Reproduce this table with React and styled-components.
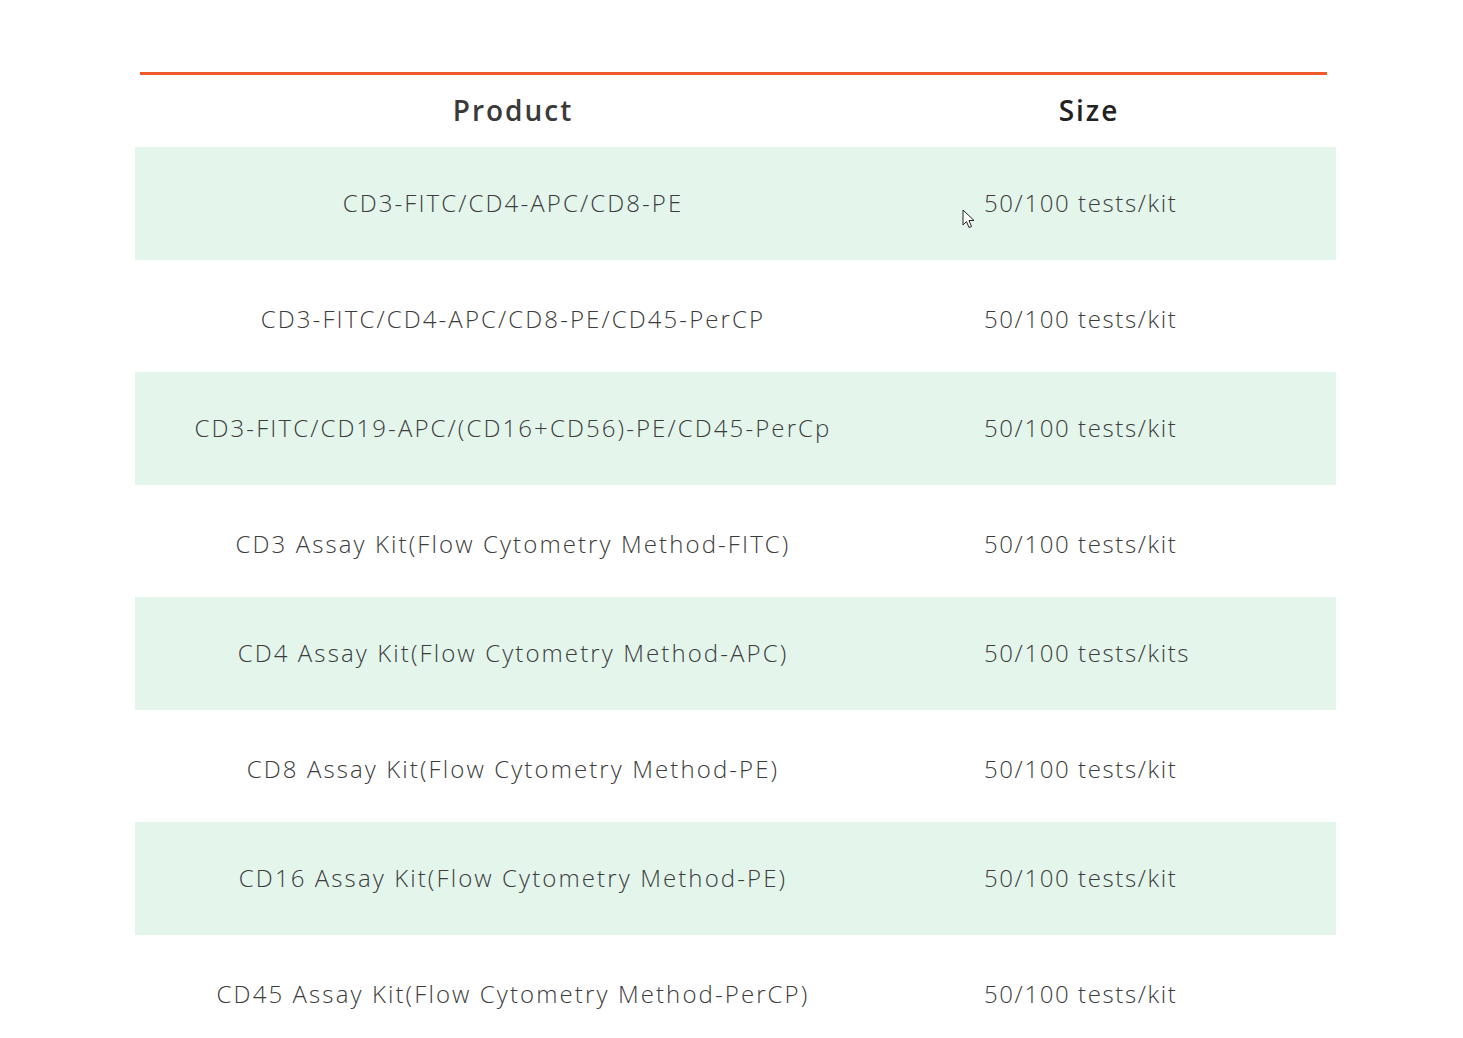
import React from 'react';
import styled, { createGlobalStyle } from 'styled-components';

const GlobalStyle = createGlobalStyle`
    body {
        margin: 0;
        background: #ffffff;
        font-family: 'Open Sans', 'Noto Sans', sans-serif;
    }
`

const Page = styled.div`
    padding: 72px 0 0 135px;
    position: relative;
`
const Table = styled.div`
    width: 1201px;
`
const Rule = styled.div`
    height: 3px;
    width: 1187px;
    margin-left: 5px;
    background: #f05a2a;
`
const HeadRow = styled.div`
    display: grid;
    grid-template-columns: 756px 1fr;
    height: 72px;
    align-items: center;
`
const HeadCell = styled.div`
    text-align: center;
    font-size: 28px;
    font-weight: 600;
    letter-spacing: 2px;
    color: ${p => p.dark ? '#222222' : '#3a3a3a'};
    padding-right: ${p => p.shift || 0}px;
    margin-top: -2px;
`
const Row = styled.div`
    display: grid;
    grid-template-columns: 756px 1fr;
    height: ${p => p.striped ? 113 : 112}px;
    align-items: center;
    background: ${p => p.striped ? '#e4f5ec' : '#ffffff'};
`
const Cell = styled.div`
    font-size: 24px;
    font-weight: 300;
    letter-spacing: ${p => p.left ? 1.6 : 2.1}px;
    color: #3c3c3c;
    white-space: nowrap;
    text-align: ${p => p.left ? 'left' : 'center'};
    padding-left: ${p => p.left ? 93 : 0}px;
    margin-top: ${p => p.striped ? -3 : 4}px;
`
const Cursor = styled.svg`
    position: absolute;
    left: 962px;
    top: 209px;
`

const rows = [
    ['CD3-FITC/CD4-APC/CD8-PE', '50/100 tests/kit'],
    ['CD3-FITC/CD4-APC/CD8-PE/CD45-PerCP', '50/100 tests/kit'],
    ['CD3-FITC/CD19-APC/(CD16+CD56)-PE/CD45-PerCp', '50/100 tests/kit'],
    ['CD3 Assay Kit(Flow Cytometry Method-FITC)', '50/100 tests/kit'],
    ['CD4 Assay Kit(Flow Cytometry Method-APC)', '50/100 tests/kits'],
    ['CD8 Assay Kit(Flow Cytometry Method-PE)', '50/100 tests/kit'],
    ['CD16 Assay Kit(Flow Cytometry Method-PE)', '50/100 tests/kit'],
    ['CD45 Assay Kit(Flow Cytometry Method-PerCP)', '50/100 tests/kit'],
];

const App = () => {
    return (
        <Page>
            <GlobalStyle />
            <Table>
                <Rule />
                <HeadRow>
                    <HeadCell>Product</HeadCell>
                    <HeadCell dark shift={49}>Size</HeadCell>
                </HeadRow>
                {rows.map((r, i) => {
                    const striped = i % 2 === 0;
                    return (
                        <Row key={i} striped={striped}>
                            <Cell striped={striped}>{r[0]}</Cell>
                            <Cell striped={striped} left>{r[1]}</Cell>
                        </Row>
                    );
                })}
            </Table>
            <Cursor width="14" height="20" viewBox="0 0 14 20">
                <path d="M1 1 L1 16 L4.5 12.5 L7 18.5 L9.5 17.5 L7 11.5 L12 11.5 Z" fill="#ffffff" stroke="#222" strokeWidth="1" strokeLinejoin="round" />
            </Cursor>
        </Page>
    );
}

export default App;
